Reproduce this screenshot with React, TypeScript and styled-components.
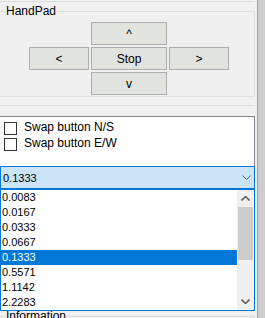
import React from "react";
import styled, { createGlobalStyle } from "styled-components";

const GlobalStyle = createGlobalStyle`
  html, body {
    margin: 0;
    padding: 0;
    background: #f0f0f0;
  }
  body {
    font-family: "Liberation Sans", Arial, sans-serif;
    font-size: 12px;
    color: #000;
    overflow: hidden;
  }
`;

const Page = styled.div`
  display: flex;
  width: 265px;
  height: 318px;
  overflow: hidden;
  background: #f0f0f0;
`;

const Main = styled.div`
  width: 257px;
  display: flex;
  flex-direction: column;
  flex-shrink: 0;
`;

const Strip = styled.div`
  width: 8px;
  box-sizing: border-box;
  border-left: 1px solid #a0a0a0;
  background: #cdcdcd;
`;

const Rule = styled.div<{ $mt: number }>`
  flex-shrink: 0;
  width: 255px;
  height: 1px;
  margin-top: ${(p) => p.$mt}px;
  background: #dcdcdc;
`;

const Group = styled.fieldset<{ $mt: number }>`
  flex-shrink: 0;
  margin: ${(p) => p.$mt}px 0 0 0;
  width: 255px;
  min-width: 0;
  box-sizing: border-box;
  padding: 0 0 1px 5px;
  border: 1px solid #dcdcdc;
  border-left: none;
`;

const Legend = styled.legend`
  padding: 0 1px;
  font-size: 12px;
  line-height: 14px;
`;

const GroupBody = styled.div`
  height: 40px;
`;

const Pad = styled.div`
  display: grid;
  grid-template-columns: 60px 76px 60px;
  grid-template-rows: repeat(3, 23px);
  gap: 2px;
  margin: 4px 0 0 24px;
`;

const PadButton = styled.button<{ $col: number; $row: number }>`
  grid-column: ${(p) => p.$col};
  grid-row: ${(p) => p.$row};
  margin: 0;
  padding: 0;
  box-sizing: border-box;
  background: #e1e3df;
  border: 1px solid #adadad;
  font-family: "Liberation Sans", Arial, sans-serif;
  font-size: 12px;
  color: #000;
`;

const Panel = styled.div`
  flex-shrink: 0;
  margin-top: 10px;
  width: 255px;
  height: 50px;
  box-sizing: border-box;
  padding: 3px 0 0 4px;
  background: #fff;
  border-top: 1px solid #828790;
  border-right: 1px solid #828790;
`;

const CheckRow = styled.label`
  display: flex;
  align-items: flex-start;
  gap: 7px;
  height: 16px;
`;

const Box = styled.span`
  width: 13px;
  height: 13px;
  margin-top: 2px;
  box-sizing: border-box;
  border: 1px solid #333;
  background: #fff;
`;

const CheckText = styled.span`
  line-height: 14px;
`;

const ComboWrap = styled.div`
  position: relative;
  flex-shrink: 0;
  width: 255px;
`;

const Combo = styled.div`
  height: 23px;
  box-sizing: border-box;
  display: flex;
  align-items: center;
  justify-content: space-between;
  padding: 0 3px 0 2px;
  border: 1px solid #0078d7;
  background: #cce4f7;
  font-size: 11px;
`;

const Dropdown = styled.div`
  position: absolute;
  top: 100%;
  left: 0;
  z-index: 2;
  width: 255px;
  height: 122px;
  box-sizing: border-box;
  display: flex;
  border: 1px solid #0078d7;
  background: #fff;
`;

const Items = styled.div`
  flex: 1;
  display: flex;
  flex-direction: column;
`;

const Item = styled.div<{ $selected?: boolean }>`
  flex-shrink: 0;
  height: 15px;
  line-height: 15px;
  padding-left: 1px;
  font-size: 11px;
  background: ${(p) => (p.$selected ? "#0078d7" : "transparent")};
  color: ${(p) => (p.$selected ? "#fff" : "#000")};
`;

const ScrollBar = styled.div`
  width: 17px;
  display: flex;
  flex-direction: column;
  background: #f0f0f0;
`;

const Arrow = styled.div`
  height: 17px;
  display: flex;
  align-items: center;
  justify-content: center;
  flex-shrink: 0;
`;

const Track = styled.div`
  flex: 1;
`;

const Thumb = styled.div`
  height: 53px;
  margin: 0 1px;
  background: #cdcdcd;
`;

const Chevron = ({ up, bold }: { up?: boolean; bold?: boolean }) => (
  <svg width="9" height="5" viewBox="0 0 9 5">
    <polyline
      points={up ? "0.5,4.5 4.5,0.5 8.5,4.5" : "0.5,0.5 4.5,4.5 8.5,0.5"}
      fill="none"
      stroke="#606060"
      strokeWidth={bold ? 1.6 : 1}
    />
  </svg>
);

const values = [
  "0.0083",
  "0.0167",
  "0.0333",
  "0.0667",
  "0.1333",
  "0.5571",
  "1.1142",
  "2.2283",
];

export default function App() {
  const selected = "0.1333";
  return (
    <Page>
      <GlobalStyle />
      <Main>
        <Rule $mt={1} />
        <Group $mt={2}>
          <Legend>HandPad</Legend>
          <Pad>
            <PadButton $col={2} $row={1}>^</PadButton>
            <PadButton $col={1} $row={2}>&lt;</PadButton>
            <PadButton $col={2} $row={2}>Stop</PadButton>
            <PadButton $col={3} $row={2}>&gt;</PadButton>
            <PadButton $col={2} $row={3}>v</PadButton>
          </Pad>
        </Group>
        <Rule $mt={8} />
        <Panel>
          <CheckRow>
            <Box />
            <CheckText>Swap button N/S</CheckText>
          </CheckRow>
          <CheckRow>
            <Box />
            <CheckText>Swap button E/W</CheckText>
          </CheckRow>
        </Panel>
        <ComboWrap>
          <Combo>
            <span>{selected}</span>
            <Chevron />
          </Combo>
          <Dropdown>
            <Items>
              {values.map((v) => (
                <Item key={v} $selected={v === selected}>
                  {v}
                </Item>
              ))}
            </Items>
            <ScrollBar>
              <Arrow>
                <Chevron up bold />
              </Arrow>
              <Track>
                <Thumb />
              </Track>
              <Arrow>
                <Chevron bold />
              </Arrow>
            </ScrollBar>
          </Dropdown>
        </ComboWrap>
        <Group $mt={120}>
          <Legend>Information</Legend>
          <GroupBody />
        </Group>
      </Main>
      <Strip />
    </Page>
  );
}
